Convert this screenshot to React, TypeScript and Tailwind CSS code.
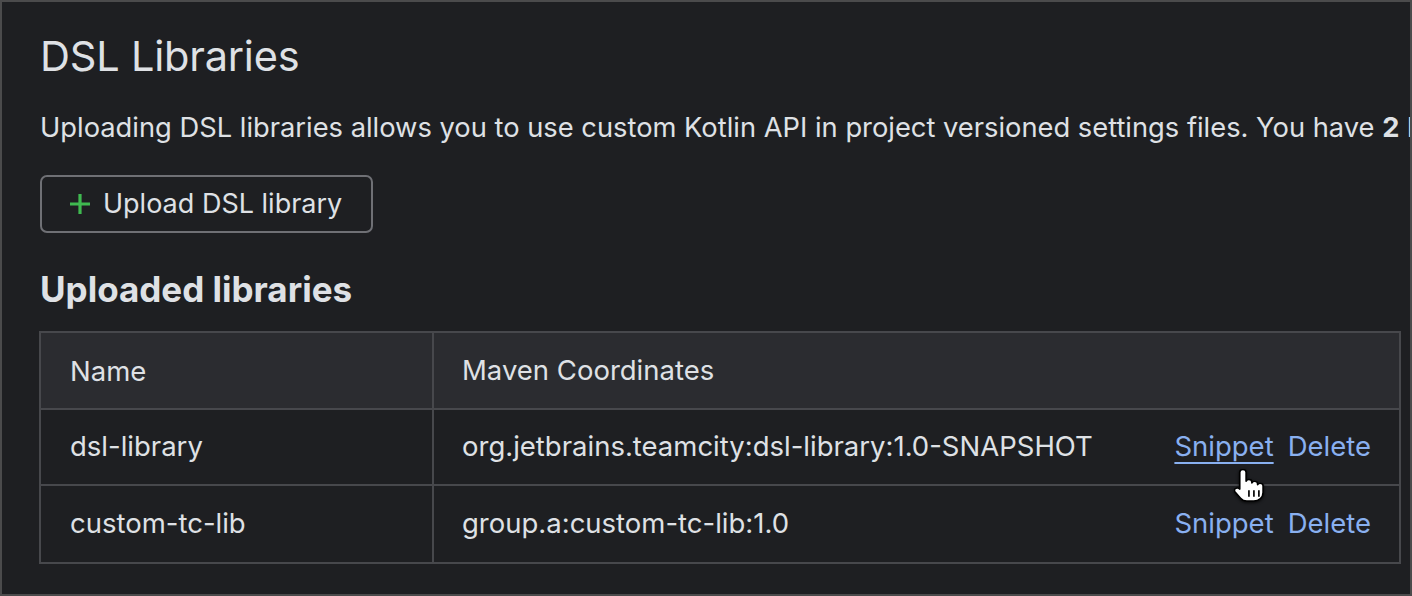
import React from "react";

function Hand() {
  return (
    <svg
      width="30"
      height="33"
      viewBox="3 1.5 23.5 31"
      preserveAspectRatio="none"
      className="absolute left-[1232px] top-[467px]"
      style={{ filter: "drop-shadow(0px 1px 1.5px rgba(0,0,0,0.8))" }}
    >
      <path
        d="M10 2c1.4 0 2.5 1.1 2.5 2.5V13c.3-1 1.2-1.6 2.2-1.6 1.3 0 2.3 1 2.3 2.3v1c.3-1 1.2-1.6 2.2-1.6 1.3 0 2.3 1 2.3 2.3v1c.3-.9 1.1-1.4 2-1.4 1.3 0 2.3 1 2.3 2.3v6.3c0 4.4-3 8-7.3 8h-5.5c-2.2 0-3.8-1.1-4.9-2.7L3.8 23c-.7-1.1-.5-2.5.5-3.2 1-.7 2.4-.5 3.1.5l.1.2V4.5C7.5 3.1 8.6 2 10 2z"
        fill="#fff"
        stroke="#000"
        strokeWidth="1.3"
        strokeLinejoin="round"
      />
      <path d="M14.7 21.5v6M18.6 21.5v6M22.5 21.5v6" stroke="#000" strokeWidth="1.3" />
    </svg>
  );
}

export default function App() {
  const rows = [
    { name: "dsl-library", coords: "org.jetbrains.teamcity:dsl-library:1.0-SNAPSHOT", hover: true },
    { name: "custom-tc-lib", coords: "group.a:custom-tc-lib:1.0", hover: false },
  ];
  return (
    <div
      className="relative w-[1412px] h-[596px] overflow-hidden border-2 border-[#4b4b4c] bg-[#1e1f22] text-[#dfe1e5]"
      style={{ fontFamily: "Inter, 'Noto Sans', sans-serif" }}
    >
      <div className="pl-[38px] pt-[28px]">
        <h1 className="text-[41.5px] leading-[52px] tracking-[-0.2px] font-normal whitespace-nowrap">DSL Libraries</h1>
        <p className="mt-[28px] text-[27.3px] leading-[36px] whitespace-nowrap">
          Uploading DSL libraries allows you to use custom Kotlin API in project versioned settings files. You have <b className="font-bold">2</b> libraries uploaded.
        </p>
        <button className="mt-[29px] flex items-center h-[58px] w-[333px] rounded-[7px] border-2 border-[#6f7075] pl-[28px] text-[27px]">
          <svg width="20" height="20" viewBox="0 0 20 20" className="mr-[13px]">
            <path d="M10 0v20M0 10h20" stroke="#3fb950" strokeWidth="3.2" />
          </svg>
          Upload DSL library
        </button>
        <h2 className="mt-[34px] text-[35px] leading-[44px] font-bold whitespace-nowrap">Uploaded libraries</h2>
        <div className="mt-[20px] -ml-[1px] mr-[9px] border-2 border-[#47484c] text-[27.5px]">
          <div className="flex h-[77px] bg-[#2b2c30] border-b-2 border-[#47484c]">
            <div className="w-[393px] flex items-center pl-[29px] pt-[3px] border-r-2 border-[#47484c]">Name</div>
            <div className="flex-1 flex items-center pl-[28px]">Maven Coordinates</div>
          </div>
          {rows.map((r, i) => (
            <div
              key={r.name}
              className={`flex h-[76px] ${i === 0 ? "border-b-2 border-[#47484c]" : ""}`}
            >
              <div className="w-[393px] flex items-center pl-[29px] border-r-2 border-[#47484c]">{r.name}</div>
              <div className="flex-1 flex items-center pl-[28px] pr-[28px]">
                <span className="flex-1 whitespace-nowrap">{r.coords}</span>
                <span className="flex gap-[14px] text-[#89b0f0] whitespace-nowrap">
                  <span className={r.hover ? "underline underline-offset-[6px] decoration-[1.5px]" : ""}>Snippet</span>
                  <span>Delete</span>
                </span>
              </div>
            </div>
          ))}
        </div>
      </div>
      <Hand />
    </div>
  );
}
